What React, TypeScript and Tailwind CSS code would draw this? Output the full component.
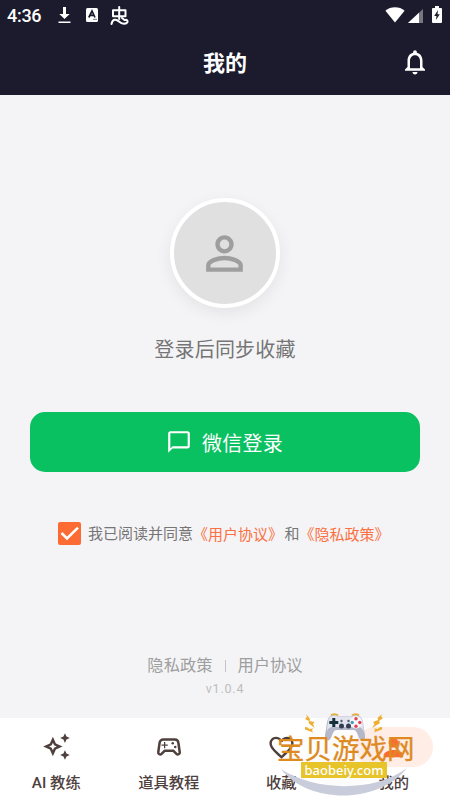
import type { ReactNode } from "react";
import {
  MdChatBubbleOutline,
  MdFavoriteBorder,
  MdNotificationsNone,
  MdOutlineAutoAwesome,
  MdOutlineSportsEsports,
  MdPerson,
  MdPersonOutline,
} from "react-icons/md";

const FONT = "font-['Roboto','Noto_Sans_CJK_SC',sans-serif]";

interface Tab {
  label: string;
  icon: ReactNode;
  active?: boolean;
}

const TABS: Tab[] = [
  { label: "AI 教练", icon: <MdOutlineAutoAwesome size={29} className="mt-[-1px]" /> },
  { label: "道具教程", icon: <MdOutlineSportsEsports size={30} /> },
  { label: "收藏", icon: <MdFavoriteBorder size={29} /> },
  { label: "我的", icon: <MdPerson size={29} />, active: true },
];

function StatusBar() {
  return (
    <div className="flex h-8 items-center pl-[7px] pr-2 text-white">
      <span className="w-[51px] text-[18px] leading-8 font-medium tracking-[-0.3px]">4:36</span>
      <svg width="13" height="18" viewBox="0 0 13 18" className="mt-[-2px]" fill="currentColor">
        <path d="M5 1h3v7h3.700L6.500 13 1.300 8H5zM0.500 15.500h12v1.500h-12z" />
      </svg>
      <svg width="12" height="14" viewBox="0 0 12 14" className="ml-[15px] mt-[-2px]">
        <rect width="12" height="14" rx="1.500" fill="#fff" />
        <path d="M2.800 9.500 6 3l3 6.500M4.300 7.400h3.500" fill="none" stroke="#1b1b2d" strokeWidth="1.700" />
        <path d="M7 11.300h4" stroke="#777783" />
      </svg>
      {/* debugger glyph */}
      <svg width="19" height="20" viewBox="0 0 19 20" className="ml-[12px] mt-[-1px]" fill="none" stroke="currentColor" strokeWidth="2" strokeLinecap="round" strokeLinejoin="round">
        <path d="M9.200 1v12M3 4.300h12.500v6H3zM1.500 18c1-5 4.500-5.500 7.500-2.500 3 3 7.500 2.800 8.500.500.400-1.500-1-2.500-2-2M12 12l2.500 2" />
      </svg>
      <svg width="20" height="16" viewBox="0 0 20 16" className="ml-auto mt-[-2px]" fill="currentColor">
        <path d="M10 15.500.400 3.800C3 1.300 6.400.200 10 .200s7 1.100 9.600 3.600z" />
      </svg>
      <svg width="15" height="15" viewBox="0 0 15 15" className="ml-[3px] mt-[-1px]">
        <path d="M0 15 15 1v14z" fill="#77777f" />
        <path d="M0 15 11 4.700V15z" fill="#fff" />
      </svg>
      <svg width="10" height="17" viewBox="0 0 10 17" className="ml-[9px] mt-[-3px]">
        <path d="M3 0h4v2h2q1 0 1 1v13q0 1-1 1H1q-1 0-1-1V3q0-1 1-1h2z" fill="#fff" />
        <path d="M6 4 2.200 10h2.300l-.6 4L7.800 8.300H5.500z" fill="#1b1b2d" />
      </svg>
    </div>
  );
}

function Gamepad() {
  return (
    <svg width="42" height="30" viewBox="0 0 42 30">
      <path d="M7 2.500q4-2.500 7 0M28 2.500q3-2.500 7 0" fill="none" stroke="#e7b13c" strokeWidth="2.200" />
      <path d="M8 2.500q4-1 7 1h12q3-2 7-1 4 1 5 7l2 13q.5 5-3 5-2 0-4-5-1.500-5-4-5.500H12q-2.500.500-4 5.500-2 5-4 5-3.500 0-3-5L3 9.500q1-6 5-7z" fill="#b4b8c9" />
      <path d="M8 3q4-1 7 1h12q3-2 7-1 3.500 1 4.500 6l1.500 10q-2-5-6-5H9q-5 0-6.500 5L4 9q.5-5 4-6z" fill="#e2e4ee" />
      <path d="M9.800 5v9M5.300 9.500h9" stroke="#17313c" strokeWidth="3" />
      <circle cx="32" cy="9.500" r="6" fill="#f7f7fb" />
      <circle cx="32" cy="5.700" r="1.700" fill="#df4453" />
      <circle cx="32" cy="13.300" r="1.700" fill="#df4453" />
      <circle cx="28.200" cy="9.500" r="1.700" fill="#4d9db3" />
      <circle cx="35.800" cy="9.500" r="1.700" fill="#df4453" />
      <circle cx="17.500" cy="13" r="2.500" fill="#343d52" />
      <circle cx="24.500" cy="13" r="2.500" fill="#343d52" />
      <circle cx="17.500" cy="8" r="1.200" fill="#555d70" />
      <circle cx="24.500" cy="8" r="1.200" fill="#555d70" />
    </svg>
  );
}

// Site badge floating over the right half of the tab bar
function SiteBadge() {
  return (
    <div className="pointer-events-none absolute top-[707px] left-[276px] h-[93px] w-[140px]">
      <svg width="140" height="93" viewBox="0 0 140 93" className="absolute inset-0">
        <circle cx="67" cy="42" r="40" fill="#f3f0ee" opacity=".2" />
        <path d="M5 62C38 84 98 86 131 61C103 97 33 98 5 62z" fill="#c9ccda" />
        <path d="m30 7 4 5-.5 2 5 1-1.500 2 1.500 4-6-5 .5-2-4-2 2-2zM29 20l3 .5 1 1.500 4-.5-1 2 1 2-5-2-3-1zM106 7l-4.500 4 .5 2-5 2 1.500 2-2.500 4 8-5-1-2 4-3-2-1.500zM106 20l-3 .5-1 1.500-4-.5 1 2-1 2 5-2 3-1z" fill="#edae31" />
      </svg>
      <div className="absolute top-[6px] left-[48px]">
        <Gamepad />
      </div>
      <div className="absolute top-[27px] left-[1px] font-['Noto_Sans_CJK_SC',sans-serif] text-[27.500px] leading-[27px] whitespace-nowrap text-[#de8a1f] [-webkit-text-stroke:0.3px_#de8a1f]">
        宝贝游戏网
      </div>
      <div className="absolute top-[55px] left-[25px] flex h-4 w-[86px] items-center justify-center bg-[#e6c42a] font-['Noto_Sans',sans-serif] text-[13px] leading-4 font-medium text-white">
        baobeiy.com
      </div>
    </div>
  );
}

export default function App() {
  return (
    <div className={`relative flex h-[800px] w-[450px] flex-col overflow-hidden bg-[#f4f4f7] ${FONT}`}>
      <header className="h-[95px] shrink-0 bg-[#1b1b2d] text-white">
        <StatusBar />
        <div className="grid h-[62px] grid-cols-[1fr_auto_1fr] items-center">
          <span />
          <h1 className="mt-[2px] text-[22px] leading-8 font-bold">我的</h1>
          <MdNotificationsNone size={30} className="mt-[-2px] mr-5 justify-self-end" />
        </div>
      </header>

      <main className="flex flex-1 flex-col items-center px-[30px]">
        <div className="mt-[103px] flex size-[110px] shrink-0 items-center justify-center rounded-full border-4 border-white bg-[#e0e0e0] text-[#9e9e9e] shadow-[0_5px_16px_rgba(0,0,0,0.07)]">
          <MdPersonOutline size={55} className="mr-px" />
        </div>
        <p className="mt-[27px] text-[20px] leading-[30px] tracking-[0.2px] text-[#757575]">登录后同步收藏</p>

        <button className="mt-[47px] flex h-[60px] w-full shrink-0 items-center justify-center gap-[10px] rounded-[15px] bg-[#09c160] text-[20px] text-white">
          <MdChatBubbleOutline size={26} className="mt-[-1px] ml-[-1px]" />
          <span className="mt-[3px] tracking-[0.2px]">微信登录</span>
        </button>

        <div className="mt-[49px] ml-[28px] flex h-6 items-center self-start text-[15px] whitespace-nowrap text-[#757575]">
          <span className="mr-[7px] flex size-[23px] items-center justify-center rounded-[2px] bg-[#fd6b35] text-white">
            <svg width="23" height="23" viewBox="0 0 23 23" fill="none" stroke="currentColor" strokeWidth="2.500">
              <path d="m3.500 11 5.500 5.500L20 5.700" />
            </svg>
          </span>
          <span className="mt-[3px]">我已阅读并同意</span>
          <span className="mt-[5px] text-[#fb7040]">《用户协议》</span>
          <span className="mt-[3px] ml-[1.500px]">和</span>
          <span className="mt-[5px] text-[#fb7040]">《隐私政策》</span>
        </div>

        <div className="mt-[109px] flex h-6 items-center text-[16.300px] text-[#9e9e9e]">
          <span>隐私政策</span>
          <span className="mx-[12px] h-3 w-px bg-[#c4c4c4]" />
          <span>用户协议</span>
        </div>
        <p className="mt-[3px] text-[12.500px] leading-4 tracking-[0.8px] text-[#bdbdbd]">v1.0.4</p>
      </main>

      <nav className="grid h-[82px] shrink-0 grid-cols-4 bg-white pt-[9px] text-[#4d403d]">
        {TABS.map((tab) => (
          <div key={tab.label} className="flex flex-col items-center">
            <span
              className={
                tab.active
                  ? "flex h-10 w-[78px] items-center justify-center rounded-full bg-[#ffede6] text-[#fd6b35]"
                  : "flex h-10 w-[78px] items-center justify-center"
              }
            >
              {tab.icon}
            </span>
            <span className="mt-[5px] text-[15.300px] leading-[22px] font-medium">{tab.label}</span>
          </div>
        ))}
      </nav>

      <SiteBadge />
    </div>
  );
}
